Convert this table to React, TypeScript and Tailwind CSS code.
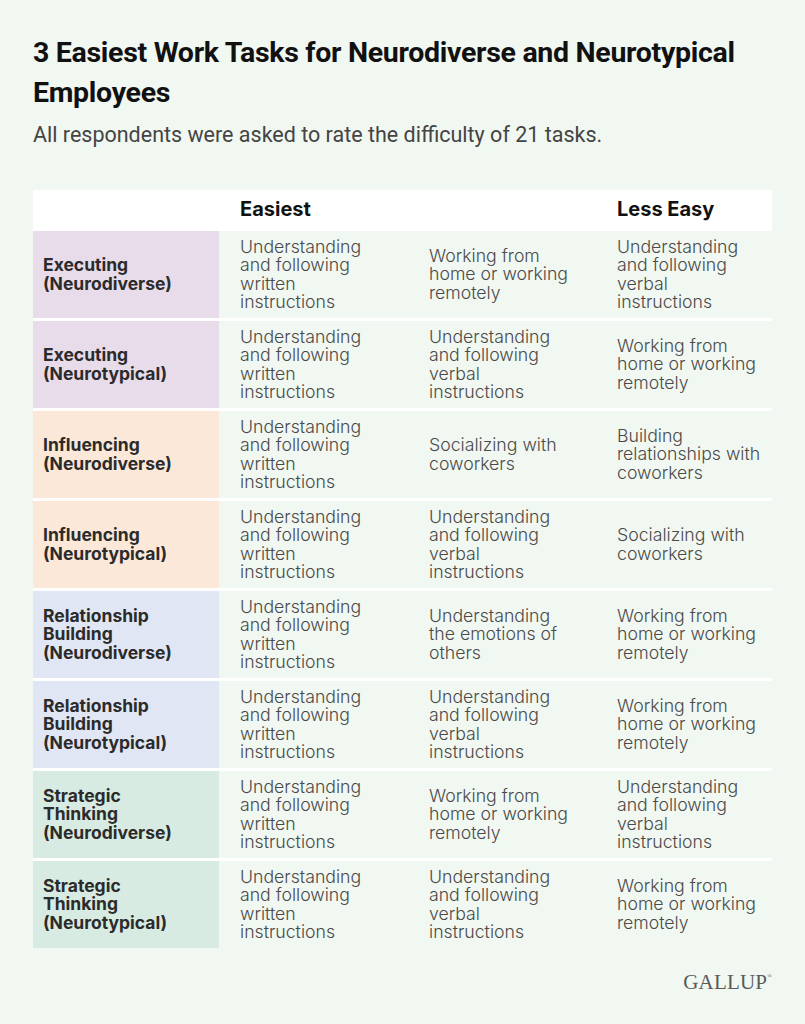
const rows = [
  { label: ["Executing", "(Neurodiverse)"], bg: "bg-[#e9dcea]", cells: ["Understanding and following written instructions", "Working from home or working remotely", "Understanding and following verbal instructions"] },
  { label: ["Executing", "(Neurotypical)"], bg: "bg-[#e9dcea]", cells: ["Understanding and following written instructions", "Understanding and following verbal instructions", "Working from home or working remotely"] },
  { label: ["Influencing", "(Neurodiverse)"], bg: "bg-[#fbe8d9]", cells: ["Understanding and following written instructions", "Socializing with coworkers", "Building relationships with coworkers"] },
  { label: ["Influencing", "(Neurotypical)"], bg: "bg-[#fbe8d9]", cells: ["Understanding and following written instructions", "Understanding and following verbal instructions", "Socializing with coworkers"] },
  { label: ["Relationship", "Building", "(Neurodiverse)"], bg: "bg-[#e1e6f4]", cells: ["Understanding and following written instructions", "Understanding the emotions of others", "Working from home or working remotely"] },
  { label: ["Relationship", "Building", "(Neurotypical)"], bg: "bg-[#e1e6f4]", cells: ["Understanding and following written instructions", "Understanding and following verbal instructions", "Working from home or working remotely"] },
  { label: ["Strategic", "Thinking", "(Neurodiverse)"], bg: "bg-[#d8ebe2]", cells: ["Understanding and following written instructions", "Working from home or working remotely", "Understanding and following verbal instructions"] },
  { label: ["Strategic", "Thinking", "(Neurotypical)"], bg: "bg-[#d8ebe2]", cells: ["Understanding and following written instructions", "Understanding and following verbal instructions", "Working from home or working remotely"] },
];

export default function App() {
  return (
    <div className="min-h-screen bg-[#f1f7f1] px-[33px] pt-[33px] font-['Roboto',sans-serif]">
      <h1 className="text-[28.5px] leading-[40px] font-bold text-[#111] tracking-[-0.3px]">
        3 Easiest Work Tasks for Neurodiverse and Neurotypical Employees
      </h1>
      <p className="mt-[8px] text-[21.5px] leading-[28px] text-[#444]">
        All respondents were asked to rate the difficulty of 21 tasks.
      </p>

      <div className="mt-[41px] w-[739px] bg-white flex flex-col gap-[3px] font-['Inter',sans-serif]">
        <div className="grid grid-cols-[186px_189px_188px_1fr] h-[38px] items-center text-[20px] font-bold text-[#111]">
          <div />
          <div className="pl-[21px]">Easiest</div>
          <div />
          <div className="pl-[21px]">Less Easy</div>
        </div>
        {rows.map((r, i) => (
          <div key={i} className="grid grid-cols-[186px_189px_188px_1fr] h-[87px] bg-[#f1f7f1]">
            <div className={`${r.bg} flex flex-col justify-center pl-[10px] text-[17.5px] leading-[18.5px] font-bold text-[#2b2b2b]`}>
              {r.label.map((l) => (
                <span key={l}>{l}</span>
              ))}
            </div>
            {r.cells.map((c, j) => (
              <div key={j} className="flex items-center pl-[21px] text-[17.7px] leading-[18.5px] font-light text-[#4a4a4a]">
                <span className="max-w-[150px]">{c}</span>
              </div>
            ))}
          </div>
        ))}
      </div>

      <div className="w-[739px] flex justify-end mt-[19px]">
        <span className="font-['Liberation_Serif',serif] text-[21px] text-[#5a5a5a] tracking-[0.2px]">
          GALLUP<sup className="text-[6px] align-super">®</sup>
        </span>
      </div>
    </div>
  );
}
